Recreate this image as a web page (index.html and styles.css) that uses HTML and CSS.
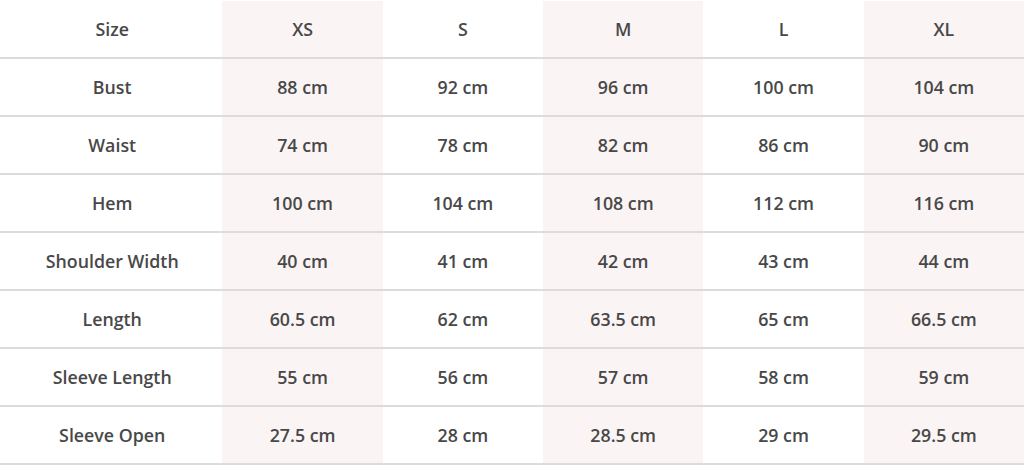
FILE: index.html
```html
<!DOCTYPE html>
<html>
<head>
<meta charset="utf-8">
<link rel="stylesheet" href="styles.css">
</head>
<body>
<table class="size-table">
  <colgroup>
    <col class="c-label">
    <col class="c-size alt">
    <col class="c-size">
    <col class="c-size alt">
    <col class="c-size">
    <col class="c-size alt">
  </colgroup>
  <tr><th>Size</th><th>XS</th><th>S</th><th>M</th><th>L</th><th>XL</th></tr>
  <tr><th>Bust</th><td>88 cm</td><td>92 cm</td><td>96 cm</td><td>100 cm</td><td>104 cm</td></tr>
  <tr><th>Waist</th><td>74 cm</td><td>78 cm</td><td>82 cm</td><td>86 cm</td><td>90 cm</td></tr>
  <tr><th>Hem</th><td>100 cm</td><td>104 cm</td><td>108 cm</td><td>112 cm</td><td>116 cm</td></tr>
  <tr><th>Shoulder Width</th><td>40 cm</td><td>41 cm</td><td>42 cm</td><td>43 cm</td><td>44 cm</td></tr>
  <tr><th>Length</th><td>60.5 cm</td><td>62 cm</td><td>63.5 cm</td><td>65 cm</td><td>66.5 cm</td></tr>
  <tr><th>Sleeve Length</th><td>55 cm</td><td>56 cm</td><td>57 cm</td><td>58 cm</td><td>59 cm</td></tr>
  <tr><th>Sleeve Open</th><td>27.5 cm</td><td>28 cm</td><td>28.5 cm</td><td>29 cm</td><td>29.5 cm</td></tr>
</table>
</body>
</html>
```
FILE: styles.css
```css
html, body {
  margin: 0;
  padding: 0;
  background: #ffffff;
}
body {
  padding-top: 1px;
}
.size-table {
  width: 1024px;
  border-collapse: collapse;
  table-layout: fixed;
  font-family: "Open Sans", "Noto Sans", sans-serif;
  font-weight: 600;
  font-size: 17.8px;
  color: #484848;
}
.c-label { width: 222px; }
.c-size { width: 160px; }
.alt { background: #fbf4f4; }
.size-table th,
.size-table td {
  height: 56px;
  padding: 0;
  text-align: center;
  vertical-align: middle;
  font-weight: 600;
  border-bottom: 2px solid #dcdcdc;
}
.size-table th:first-child {
  padding-left: 2px;
}
```
